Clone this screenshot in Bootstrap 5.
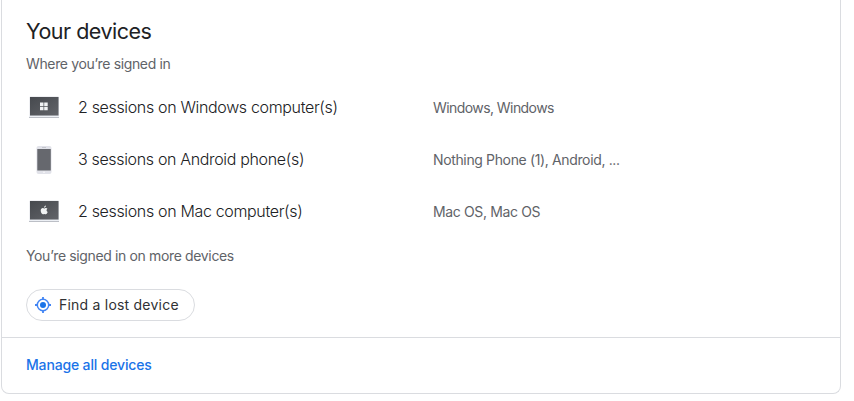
<!DOCTYPE html>
<html lang="en">
<head>
<meta charset="utf-8">
<meta name="viewport" content="width=device-width, initial-scale=1">
<title>Your devices</title>
<link href="https://cdn.jsdelivr.net/npm/bootstrap@5.3.0/dist/css/bootstrap.min.css" rel="stylesheet">
<style>
body { font-family: Inter, Roboto, sans-serif; font-size: 14px; line-height: 20px; color: #5f6368; background: #fff; overflow: hidden; }
.devices-card { width: 840px; height: 394px; margin-left: 1px; border: 1px solid #dadce0; border-top: 0; border-radius: 0 0 8px 8px; color: inherit; }
.devices-body { height: 337px; padding: 17px 24px 0; }
.devices-title { font-size: 21.500px; line-height: 28px; font-weight: 400; color: #202124; letter-spacing: -.5px; margin-bottom: 9px; }
.muted-line { font-size: 14px; letter-spacing: -.36px; }
.muted-tight { letter-spacing: -.57px; }
.device-row { height: 52px; }
.device-icon { width: 36px; height: 36px; margin-right: 16px; }
.device-name { width: 355px; padding-bottom: 2px; font-size: 16px; line-height: 24px; font-weight: 300; color: #202124; letter-spacing: -.34px; }
.find-btn { height: 32px; padding: 0 15px 0 8px; margin-top: 23px; border: 1px solid #dadce0; border-radius: 16px; font-size: 14px; color: #303134; letter-spacing: .22px; }
.devices-footer { height: 56px; padding: 0 24px 2px; border-top: 1px solid #dadce0; }
.manage-link { font-size: 14px; font-weight: 500; color: #1a73e8; letter-spacing: -.16px; }
</style>
</head>
<body>
<main class="card devices-card">
  <div class="devices-body">
    <h2 class="devices-title">Your devices</h2>
    <p class="muted-line mb-2">Where you’re signed in</p>
    <div class="device-row d-flex align-items-center">
      <svg class="device-icon" viewBox="0 0 36 36" aria-hidden="true">
        <defs><linearGradient id="screen" x1="0" y1="0" x2="1" y2="1"><stop offset="0" stop-color="#46494e"/><stop offset="1" stop-color="#626469"/></linearGradient></defs>
        <rect x="3.500" y="6.500" width="29.500" height="20" rx="1" fill="#dfe2e8"/><rect x="4" y="7" width="28.500" height="18.500" fill="url(#screen)"/>
        <path d="M14 12.500h3.500V16H14zM18.200 12.500h3.500V16h-3.500zM14 16.700h3.500v3.500H14zM18.200 16.700h3.500v3.500h-3.500z" fill="#f1f3f4"/>
        <path d="M3 27h30v1H3z" fill="#bcbfc6"/><path d="M3 26h30v1H3z" fill="#edf0f5"/>
      </svg>
      <div class="device-name">2 sessions on Windows computer(s)</div>
      <div class="muted-line muted-tight">Windows, Windows</div>
    </div>
    <div class="device-row d-flex align-items-center">
      <svg class="device-icon" viewBox="0 0 36 36" aria-hidden="true">
        <rect x="10.500" y="4" width="15" height="28" rx="2" fill="#e1e2e9"/><rect x="11.300" y="7" width="13.500" height="21.500" fill="#66686e"/>
        <path d="M16 5.500h4" stroke="#c4c6cd"/><circle cx="18" cy="30.300" r=".7" fill="#fff"/>
      </svg>
      <div class="device-name">3 sessions on Android phone(s)</div>
      <div class="muted-line">Nothing Phone (1), Android, ...</div>
    </div>
    <div class="device-row d-flex align-items-center">
      <svg class="device-icon" viewBox="0 0 36 36" aria-hidden="true">
        <rect x="3.500" y="6.500" width="29.500" height="20" rx="1" fill="#dfe2e8"/><rect x="4" y="7" width="28.500" height="18.500" fill="url(#screen)"/>
        <path transform="translate(-.2 -1)" d="M18.300 14.800c0-1.300.8-2 1.800-2.200.1 1.300-.7 2.200-1.800 2.200zM18.400 15.600c.6 0 1-.5 1.800-.5.6 0 1.100.3 1.400.7-1.300.9-1.100 2.600.3 3.200-.4 1.100-1.100 2.200-1.900 2.200-.6 0-.8-.3-1.500-.3s-.9.3-1.500.3c-1.100 0-2.100-2-2.100-3.600s1-2.500 2.100-2.500c.6 0 1 .5 1.400.5z" fill="#f1f3f4"/>
        <path d="M3 27h30v1H3z" fill="#bcbfc6"/><path d="M3 26h30v1H3z" fill="#edf0f5"/>
      </svg>
      <div class="device-name">2 sessions on Mac computer(s)</div>
      <div class="muted-line">Mac OS, Mac OS</div>
    </div>
    <p class="muted-line mb-0 pt-2">You’re signed in on more devices</p>
    <a href="#" class="find-btn d-inline-flex align-items-center text-decoration-none">
      <svg class="me-2" width="16" height="16" viewBox="0 0 16 16" aria-hidden="true"><circle cx="8" cy="8" r="5.700" fill="none" stroke="#4285f4" stroke-width="1.500"/><circle cx="8" cy="8" r="3" fill="#1a73e8"/><path d="M8 0v2.500M8 13.500V16M0 8h2.500M13.500 8H16" stroke="#4285f4" stroke-width="1.800"/></svg>
      <span>Find a lost device</span>
    </a>
  </div>
  <div class="devices-footer d-flex align-items-center">
    <a href="#" class="manage-link text-decoration-none">Manage all devices</a>
  </div>
</main>
<script src="https://cdn.jsdelivr.net/npm/bootstrap@5.3.0/dist/js/bootstrap.bundle.min.js"></script>
</body>
</html>
